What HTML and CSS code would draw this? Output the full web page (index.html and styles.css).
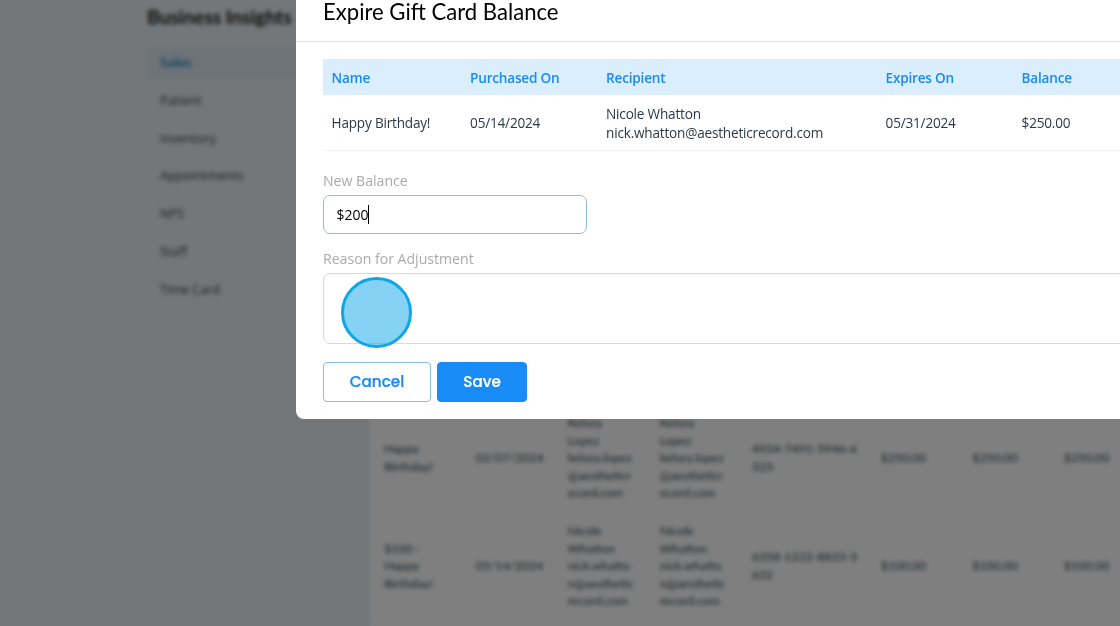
FILE: index.html
```html
<!DOCTYPE html>
<html lang="en">
<head>
    <meta charset="UTF-8">
    <meta name="viewport" content="width=device-width, initial-scale=1.0">
    <title>Business Insights</title>
    <link rel="stylesheet" href="styles.css">
</head>
<body>
    <div class="page">
        <aside class="sidebar">
            <h1>Business Insights</h1>
            <nav>
                <a class="active">Sales</a>
                <a>Patient</a>
                <a>Inventory</a>
                <a>Appointments</a>
                <a>NPS</a>
                <a>Staff</a>
                <a>Time Card</a>
            </nav>
        </aside>
        <main class="report">
            <div class="report-row">
                <div>Happy<br>Birthday!</div>
                <div>02/07/2024</div>
                <div>Kelsey<br>Lopez<br>kelsey.lopez<br>@aestheticr<br>ecord.com</div>
                <div>Kelsey<br>Lopez<br>kelsey.lopez<br>@aestheticr<br>ecord.com</div>
                <div>4934-7491-5946-6<br>323</div>
                <div>$250.00</div>
                <div>$250.00</div>
                <div>$250.00</div>
            </div>
            <div class="report-row">
                <div>$100 -<br>Happy<br>Birthday!</div>
                <div>05/14/2024</div>
                <div>Nicole<br>Whatton<br>nick.whatto<br>n@aesthetic<br>record.com</div>
                <div>Nicole<br>Whatton<br>nick.whatto<br>n@aesthetic<br>record.com</div>
                <div>6358-1222-8823-3<br>632</div>
                <div>$100.00</div>
                <div>$100.00</div>
                <div>$100.00</div>
            </div>
        </main>
    </div>

    <div class="overlay">
        <div class="modal">
            <h2 class="modal-title">Expire Gift Card Balance</h2>
            <div class="modal-body">
                <div class="table-row table-head">
                    <div>Name</div>
                    <div>Purchased On</div>
                    <div>Recipient</div>
                    <div>Expires On</div>
                    <div>Balance</div>
                </div>
                <div class="table-row">
                    <div>Happy Birthday!</div>
                    <div>05/14/2024</div>
                    <div>Nicole Whatton<br>nick.whatton@aestheticrecord.com</div>
                    <div>05/31/2024</div>
                    <div>$250.00</div>
                </div>
                <div class="label">New Balance</div>
                <div class="field balance">$200<span class="caret"></span></div>
                <div class="label">Reason for Adjustment</div>
                <div class="field reason"></div>
                <div class="buttons">
                    <button class="btn cancel">Cancel</button>
                    <button class="btn save">Save</button>
                </div>
            </div>
        </div>
    </div>
    <div class="click-marker"></div>
</body>
</html>
```

FILE: styles.css
```css
* {
    box-sizing: border-box;
}
body {
    margin: 0;
    height: 626px;
    overflow: hidden;
    position: relative;
    font-family: "Open Sans", "Noto Sans", sans-serif;
    background-color: #e6eef3;
}
.page {
    display: flex;
    height: 626px;
    overflow: hidden;
}
.sidebar {
    flex: 0 0 370px;
    padding: 5px 10px 0 147px;
}
.sidebar h1 {
    margin: 0 0 17px;
    font-family: Lato, sans-serif;
    font-size: 19.1px;
    line-height: 24px;
    padding-bottom: 1px;
    font-weight: bold;
    color: #222;
}
.sidebar nav {
    display: flex;
    flex-direction: column;
    gap: 6.8px;
}
.sidebar a {
    height: 31px;
    line-height: 31px;
    padding-left: 13px;
    font-size: 12.6px;
    color: #43474a;
}
.sidebar .active {
    background-color: #dbe7ee;
    color: #1a8ccc;
    font-weight: 600;
}
.report {
    flex: none;
    width: 830px;
    padding-top: 404px;
    background-color: #fff;
}
.report-row {
    display: grid;
    grid-template-columns: 91.5px 92px 92px 92px 129px 91.5px 91.5px 91.5px;
    height: 108px;
    padding: 1px 0 0 2px;
    align-items: center;
    border-bottom: 1px solid #f8f8f8;
    font-family: Lato, sans-serif;
    font-size: 12.2px;
    line-height: 17.6px;
    color: #37474f;
}
.report-row div {
    padding-left: 12.2px;
    white-space: nowrap;
}

/* Dimmed backdrop with the dialog on top */
.overlay {
    position: absolute;
    top: 0;
    left: 0;
    width: 100%;
    height: 626px;
    overflow: hidden;
    padding-left: 296px;
    background-color: rgba(0, 0, 0, 0.5);
    backdrop-filter: blur(2.2px);
}
.modal {
    width: 900px;
    height: 419px;
    background-color: #fff;
    border-radius: 0 0 8px 8px;
}
.modal-title {
    margin: 0;
    height: 42px;
    padding-left: 27px;
    border-bottom: 1px solid #dfe1e3;
    font-family: Lato, sans-serif;
    font-size: 22.1px;
    line-height: 23px;
    font-weight: normal;
    color: #000;
}
.modal-body {
    padding: 17px 27px 0;
}
.table-row {
    display: grid;
    grid-template-columns: 138.5px 136px 279.5px 136px 1fr;
    height: 56px;
    align-items: center;
    padding-left: 8.6px;
    border-bottom: 1px solid #f3f3f3;
    font-size: 13.6px;
    line-height: 19px;
    letter-spacing: -0.21px;
    color: #2b3a48;
}
.table-head {
    height: 36px;
    border-bottom: none;
    background-color: #dbeefd;
    color: #188bf6;
    font-weight: 600;
}
.label {
    padding-top: 19px;
    height: 44px;
    font-size: 14.1px;
    line-height: 21px;
    color: #aaa;
}
.field {
    border: 1px solid #d9dadb;
    border-radius: 7px;
}
.balance {
    display: flex;
    align-items: center;
    width: 264px;
    height: 39px;
    padding-left: 12.6px;
    border-color: #87bfe4;
    font-size: 14px;
    color: #000;
}
.balance + .label {
    padding-top: 14px;
    height: 39px;
}
.caret {
    width: 1px;
    height: 19px;
    margin-left: -1px;
    background-color: #000;
}
.reason {
    height: 71px;
}
.buttons {
    display: flex;
    gap: 6px;
    margin-top: 18px;
}
.btn {
    height: 40px;
    padding: 0 0 1px;
    border: 1px solid #87bfe4;
    border-radius: 4px;
    font-family: Poppins, Inter, sans-serif;
    font-size: 15.2px;
    font-weight: 500;
    -webkit-text-stroke: 0.2px;
}
.cancel {
    width: 108px;
    background-color: #fff;
    color: #188bf6;
}
.save {
    width: 90px;
    border-color: #188bf6;
    background-color: #188bf6;
    color: #fff;
}
.click-marker {
    position: absolute;
    left: 341px;
    top: 277px;
    width: 71px;
    height: 71px;
    border: 3px solid #0fa5e9;
    border-radius: 50%;
    background-color: rgba(14, 165, 233, 0.5);
}
```
